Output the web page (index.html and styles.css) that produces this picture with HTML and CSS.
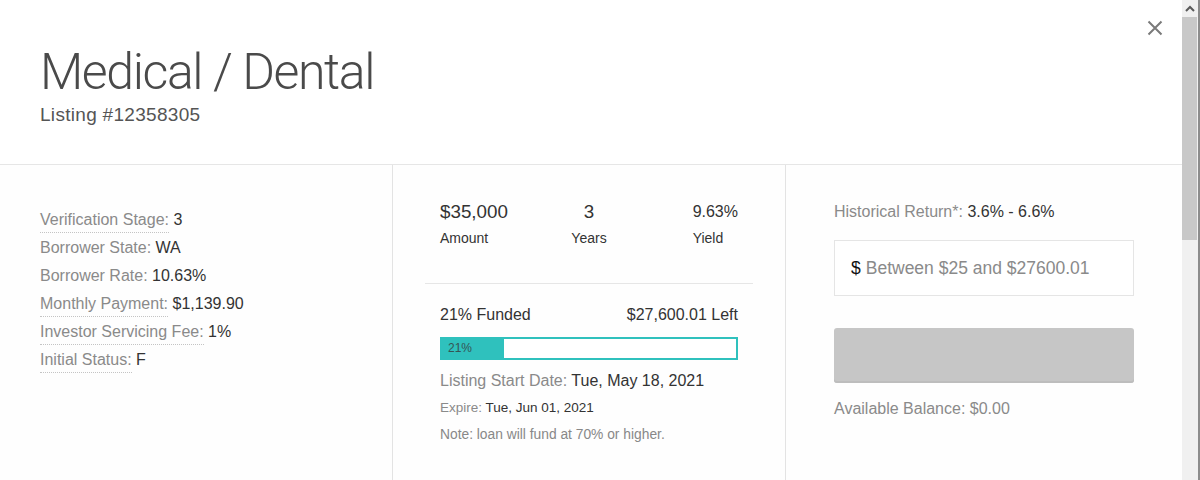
FILE: index.html
```html
<!DOCTYPE html>
<html>
<head>
<meta charset="utf-8">
<link rel="stylesheet" href="styles.css">
</head>
<body>
<div class="page">
  <div class="modal">
    <header class="head">
      <h1 class="title">Medical / Dental</h1>
      <div class="listing">Listing #12358305</div>
      <button class="close" aria-label="Close">
        <svg width="16" height="16" viewBox="0 0 16 16"><path d="M1.5 1.5 L14.5 14.5 M14.5 1.5 L1.5 14.5" stroke="#7a7a7a" stroke-width="2" fill="none"/></svg>
      </button>
    </header>
    <div class="cols">
      <section class="col col-left">
        <div class="row"><span class="lbl dotted">Verification Stage:</span> <span class="val">3</span></div>
        <div class="row"><span class="lbl">Borrower State:</span> <span class="val">WA</span></div>
        <div class="row"><span class="lbl">Borrower Rate:</span> <span class="val">10.63%</span></div>
        <div class="row"><span class="lbl dotted">Monthly Payment:</span> <span class="val">$1,139.90</span></div>
        <div class="row"><span class="lbl dotted">Investor Servicing Fee:</span> <span class="val">1%</span></div>
        <div class="row"><span class="lbl dotted">Initial Status:</span> <span class="val">F</span></div>
      </section>
      <section class="col col-mid">
        <div class="stats">
          <div class="stat s1"><div class="sv">$35,000</div><div class="sl">Amount</div></div>
          <div class="stat s2"><div class="sv">3</div><div class="sl">Years</div></div>
          <div class="stat s3"><div class="inner"><div class="sv sv-sm">9.63%</div><div class="sl">Yield</div></div></div>
        </div>
        <div class="funding">
          <div class="frow"><span>21% Funded</span><span>$27,600.01 Left</span></div>
          <div class="bar"><div class="fill" style="width:21%">21%</div></div>
          <div class="start"><span class="lbl">Listing Start Date:</span> <span class="val">Tue, May 18, 2021</span></div>
          <div class="expire"><span class="lbl">Expire:</span> <span class="val">Tue, Jun 01, 2021</span></div>
          <div class="note">Note: loan will fund at 70% or higher.</div>
        </div>
      </section>
      <section class="col col-right">
        <div class="hist"><span class="lbl">Historical Return*:</span> <span class="val">3.6% - 6.6%</span></div>
        <div class="amount"><span class="cur">$</span> <span class="ph">Between $25 and $27600.01</span></div>
        <div class="btn"></div>
        <div class="bal">Available Balance: $0.00</div>
      </section>
    </div>
  </div>
  <div class="scrollbar">
    <div class="arrow"><svg width="16" height="17" viewBox="0 0 16 17"><path d="M4 11 L8 7 L12 11" stroke="#5a5a5a" stroke-width="2" fill="none"/></svg></div>
    <div class="thumb"></div>
  </div>
  <div class="edge"></div>
</div>
</body>
</html>
```

FILE: styles.css
```css
html, body {
  margin: 0;
  padding: 0;
  background: #fff;
}
body {
  font-family: "Liberation Sans", Arial, sans-serif;
  color: #333;
}
.page {
  display: flex;
  width: 1200px;
  height: 480px;
  overflow: hidden;
}
.modal {
  width: 1182px;
  display: flex;
  flex-direction: column;
  background: #fefefe;
}
.head {
  position: relative;
  box-sizing: border-box;
  height: 165px;
  border-bottom: 1px solid #e6e6e6;
  background: #fff;
  padding: 44px 40px 0;
}
.title {
  margin: 0;
  font-family: Roboto, "Liberation Sans", sans-serif;
  font-weight: 300;
  font-size: 50px;
  line-height: 56px;
  color: #4a4a4a;
  letter-spacing: -1.4px;
}
.listing {
  margin-top: 3px;
  font-size: 19px;
  line-height: 24px;
  letter-spacing: 0.3px;
  color: #555;
}
.close {
  position: absolute;
  right: 19px;
  top: 20px;
  width: 16px;
  height: 16px;
  padding: 0;
  border: 0;
  background: none;
}
.close svg { display: block; }

.cols {
  flex: 1;
  display: flex;
}
.col {
  box-sizing: border-box;
}
.col-left {
  width: 393px;
  padding: 41px 0 0 40px;
  border-right: 1px solid #e3e3e3;
}
.col-mid {
  width: 393px;
  padding: 0 32px;
  border-right: 1px solid #e3e3e3;
}
.col-right {
  flex: 1;
  padding: 37px 48px 0;
}
.lbl { color: #8a8a8a; }
.val { color: #333; }

.row {
  font-size: 16px;
  line-height: 28px;
}
.dotted {
  display: inline-block;
  line-height: 18px;
  padding-bottom: 3px;
  border-bottom: 1px dotted #c4c4c4;
}

.stats {
  display: grid;
  grid-template-columns: 1fr 1fr 1fr;
  height: 119px;
  box-sizing: border-box;
  padding: 37px 15px 0;
  border-bottom: 1px solid #e6e6e6;
}
.sv {
  font-size: 18.8px;
  line-height: 20px;
  color: #333;
}
.sv-sm { font-size: 16px; }
.sl {
  margin-top: 8px;
  font-size: 14px;
  line-height: 16px;
  color: #333;
}
.s2 { text-align: center; }
.s3 { display: flex; justify-content: flex-end; }

.funding {
  padding: 21px 15px 0;
  font-size: 16px;
}
.frow {
  display: flex;
  justify-content: space-between;
  line-height: 20px;
  color: #333;
}
.bar {
  margin-top: 12px;
  height: 23px;
  box-sizing: border-box;
  border: 2px solid #2fc1bd;
  background: #fff;
}
.fill {
  height: 100%;
  background: #2fc1bd;
  font-size: 12px;
  line-height: 19px;
  padding-left: 6px;
  box-sizing: border-box;
  color: #355555;
}
.start {
  margin-top: 11px;
  line-height: 20px;
}
.expire {
  margin-top: 8px;
  font-size: 13.5px;
  line-height: 18px;
}
.note {
  margin-top: 9px;
  font-size: 13.8px;
  line-height: 18px;
  color: #888;
}

.hist {
  font-size: 16px;
  line-height: 20px;
}
.amount {
  margin-top: 18px;
  height: 56px;
  box-sizing: border-box;
  border: 1px solid #e5e5e5;
  background: #fff;
  padding-left: 16px;
  display: flex;
  align-items: center;
  gap: 5px;
  font-size: 17.5px;
}
.cur { color: #111; }
.ph { color: #8a8a8a; }
.btn {
  margin-top: 32px;
  height: 55px;
  border-radius: 3px;
  background: #c6c6c6;
  box-shadow: inset 0 -2px 0 #bdbdbd;
}
.bal {
  margin-top: 16px;
  font-size: 16px;
  line-height: 20px;
  color: #8a8a8a;
}

.scrollbar {
  width: 16px;
  background: #f0f0f0;
  display: flex;
  flex-direction: column;
}
.arrow { height: 17px; }
.arrow svg { display: block; }
.thumb {
  margin-right: 1px;
  height: 223px;
  background: #c8c8c8;
}
.edge {
  width: 2px;
  background: #8c8c8c;
}
```
